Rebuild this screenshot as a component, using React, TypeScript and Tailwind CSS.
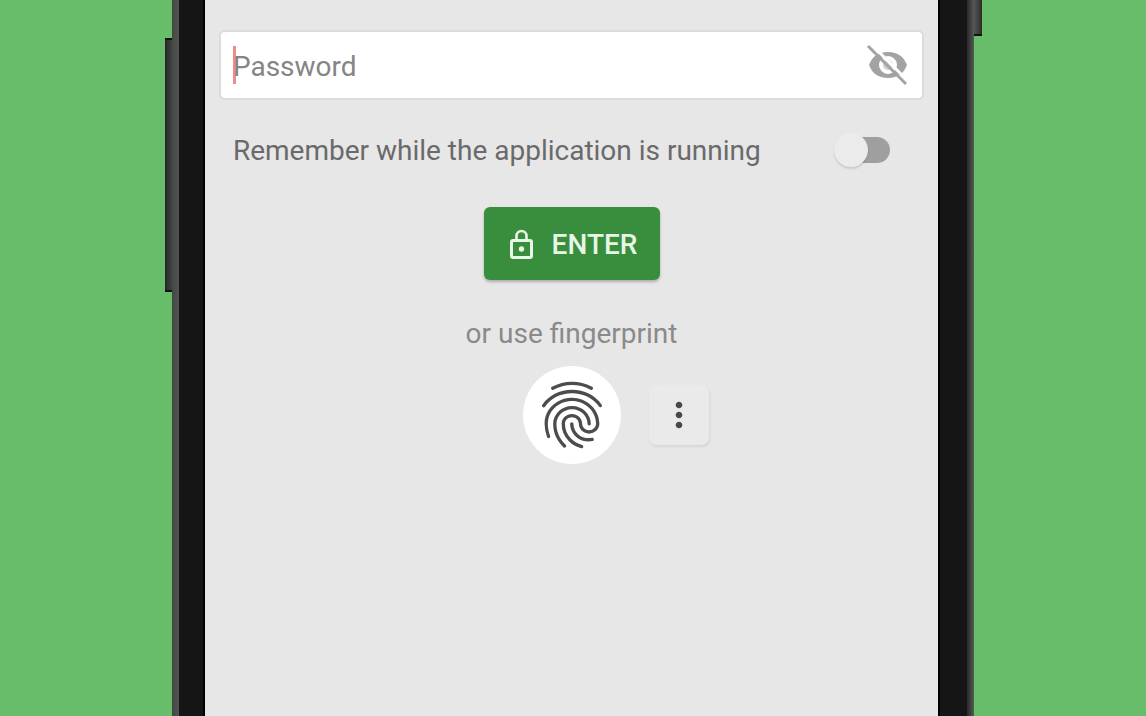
import { useState } from "react";
import { MdFingerprint, MdMoreVert } from "react-icons/md";

function HiddenIcon() {
  return (
    <svg viewBox="0 0 44 44" className="size-11" aria-hidden="true">
      <path
        fill="#a3a3a3"
        fillRule="evenodd"
        d="M22 9C12 9 6 14 3 22c3 8 9 13 19 13s16-5 19-13C38 14 32 9 22 9Zm0 4a9 9 0 1 1 0 18 9 9 0 0 1 0-18Z"
      />
      <circle cx="22" cy="22" r="5" fill="#cfcfcf" />
      <path d="M5 1 43 39" stroke="#fff" strokeWidth="3" />
      <path d="M2 3 40 41" stroke="#a3a3a3" strokeWidth="3" />
    </svg>
  );
}

function LockIcon() {
  return (
    <svg viewBox="0 0 32 32" className="size-8" fill="none" stroke="currentColor" aria-hidden="true">
      <rect x="5.5" y="11.5" width="20" height="17" rx="1.5" strokeWidth="3" />
      <path d="M10.5 11V7a5 5 0 0 1 10 0v4" strokeWidth="2.6" />
      <circle cx="15.5" cy="20" r="2.7" fill="currentColor" stroke="none" />
    </svg>
  );
}

function UnlockForm() {
  const [password, setPassword] = useState("");
  const [visible, setVisible] = useState(false);
  return (
    <form
      className="flex flex-col items-center px-3.5 pt-[30px]"
      onSubmit={(event) => event.preventDefault()}
    >
      <div className="relative flex h-[70px] w-full items-center rounded-md border-2 border-[#dcdcdc] bg-white px-3">
        <span className="absolute left-3 h-[38px] w-[3px] bg-[#e57368]/80" />
        <input
          type={visible ? "text" : "password"}
          aria-label="Password"
          placeholder="Password"
          value={password}
          onChange={(event) => setPassword(event.target.value)}
          className="min-w-0 flex-1 bg-transparent pt-1 text-[28px] leading-9 text-[#555] caret-[#e57368] outline-none placeholder:text-[#858585]"
        />
        <button type="button" aria-label="Show password" onClick={() => setVisible(!visible)}>
          <HiddenIcon />
        </button>
      </div>

      <label className="mt-[30px] flex h-10 w-full items-center justify-between pr-[34px] pl-3.5 text-[28px] text-[#6a6a6a]">
        <span className="pt-0.5">Remember while the application is running</span>
        <span className="relative flex h-9 w-14 items-center">
          <input type="checkbox" role="switch" className="peer absolute inset-0 z-10 opacity-0" />
          <span className="ml-3 h-[26px] flex-1 rounded-full bg-[#9f9f9f] peer-checked:bg-[#8bc48d]" />
          <span className="absolute left-0 size-[34px] rounded-full bg-[#ebebeb] shadow-[0_2px_2px_#00000020] peer-checked:left-5" />
        </span>
      </label>

      <button
        type="submit"
        className="mt-[37px] flex h-[73px] w-44 items-center justify-center gap-3.5 rounded-md bg-[#388e3c] pt-0.5 text-[28px] font-medium text-[#e8f5e9] shadow-[0_2px_3px_#00000040]"
      >
        <LockIcon />
        ENTER
      </button>

      <p className="mt-[34px] text-[28px] leading-10 text-[#8a8a8a]">or use fingerprint</p>

      <div className="mt-3 grid w-full grid-cols-[1fr_auto_1fr] items-center gap-7">
        <button
          type="button"
          aria-label="Use fingerprint"
          className="col-start-2 flex size-[98px] items-center justify-center rounded-full bg-white text-[#4c4c4c]"
        >
          <MdFingerprint className="size-20" />
        </button>
        <button
          type="button"
          aria-label="More options"
          className="flex size-[60px] items-center justify-center rounded-lg bg-[#eaeaea] text-[#484848] shadow-[1px_2px_3px_#00000014]"
        >
          <MdMoreVert className="size-10" />
        </button>
      </div>
    </form>
  );
}

export default function App() {
  return (
    <div className="flex min-h-screen items-stretch bg-[#68bd6b] px-[15%] font-[Roboto,sans-serif]">
      <div className="relative flex flex-1">
        <div className="absolute top-[38px] right-full h-[254px] w-[7px] border-y-2 border-[#111] bg-linear-to-r from-[#252525] to-[#444]" />
        <div className="absolute top-0 left-full h-9 w-[8px] border-b-2 border-[#111] bg-linear-to-r from-[#555] to-[#2c2c2c]" />
        <div className="w-[7px] bg-linear-to-r from-[#3f4a40] to-[#555355]" />
        <div className="w-[26px] border-r-2 border-black bg-[#151515]" />
        <main className="flex-1 bg-[#e7e7e7]">
          <UnlockForm />
        </main>
        <div className="w-[29px] border-l-2 border-black bg-[#151515]" />
        <div className="w-[7px] bg-linear-to-r from-[#2a2829] to-[#555a55]" />
      </div>
    </div>
  );
}
